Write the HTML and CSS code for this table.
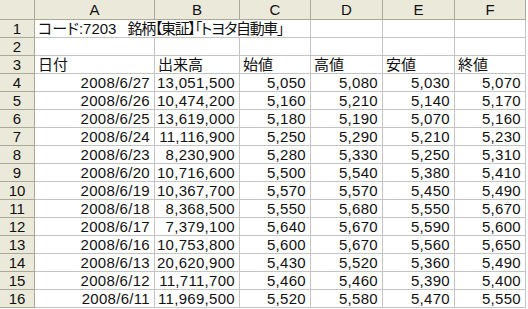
FILE: index.html
```html
<!DOCTYPE html>
<html lang="ja">
<head>
<meta charset="utf-8">
<link rel="stylesheet" href="styles.css">
</head>
<body>
<div class="sheet">
  <div class="corner"></div>
  <div class="ch">A</div><div class="ch">B</div><div class="ch">C</div><div class="ch">D</div><div class="ch">E</div><div class="ch">F</div>

  <div class="rh">1</div>
  <div class="c span3"><span>コード:7203　</span><span class="tight">銘柄【東証】「トヨタ自動車」</span></div><div class="c"></div><div class="c"></div><div class="c"></div>

  <div class="rh">2</div>
  <div class="c"></div><div class="c"></div><div class="c"></div><div class="c"></div><div class="c"></div><div class="c"></div>

  <div class="rh">3</div>
  <div class="c">日付</div><div class="c">出来高</div><div class="c">始値</div><div class="c">高値</div><div class="c">安値</div><div class="c">終値</div>

  <div class="rh">4</div>
  <div class="c n">2008/6/27</div><div class="c n">13,051,500</div><div class="c n">5,050</div><div class="c n">5,080</div><div class="c n">5,030</div><div class="c n">5,070</div>
  <div class="rh">5</div>
  <div class="c n">2008/6/26</div><div class="c n">10,474,200</div><div class="c n">5,160</div><div class="c n">5,210</div><div class="c n">5,140</div><div class="c n">5,170</div>
  <div class="rh">6</div>
  <div class="c n">2008/6/25</div><div class="c n">13,619,000</div><div class="c n">5,180</div><div class="c n">5,190</div><div class="c n">5,070</div><div class="c n">5,160</div>
  <div class="rh">7</div>
  <div class="c n">2008/6/24</div><div class="c n">11,116,900</div><div class="c n">5,250</div><div class="c n">5,290</div><div class="c n">5,210</div><div class="c n">5,230</div>
  <div class="rh">8</div>
  <div class="c n">2008/6/23</div><div class="c n">8,230,900</div><div class="c n">5,280</div><div class="c n">5,330</div><div class="c n">5,250</div><div class="c n">5,310</div>
  <div class="rh">9</div>
  <div class="c n">2008/6/20</div><div class="c n">10,716,600</div><div class="c n">5,500</div><div class="c n">5,540</div><div class="c n">5,380</div><div class="c n">5,410</div>
  <div class="rh">10</div>
  <div class="c n">2008/6/19</div><div class="c n">10,367,700</div><div class="c n">5,570</div><div class="c n">5,570</div><div class="c n">5,450</div><div class="c n">5,490</div>
  <div class="rh">11</div>
  <div class="c n">2008/6/18</div><div class="c n">8,368,500</div><div class="c n">5,550</div><div class="c n">5,680</div><div class="c n">5,550</div><div class="c n">5,670</div>
  <div class="rh">12</div>
  <div class="c n">2008/6/17</div><div class="c n">7,379,100</div><div class="c n">5,640</div><div class="c n">5,670</div><div class="c n">5,590</div><div class="c n">5,600</div>
  <div class="rh">13</div>
  <div class="c n">2008/6/16</div><div class="c n">10,753,800</div><div class="c n">5,600</div><div class="c n">5,670</div><div class="c n">5,560</div><div class="c n">5,650</div>
  <div class="rh">14</div>
  <div class="c n">2008/6/13</div><div class="c n">20,620,900</div><div class="c n">5,430</div><div class="c n">5,520</div><div class="c n">5,360</div><div class="c n">5,490</div>
  <div class="rh">15</div>
  <div class="c n">2008/6/12</div><div class="c n">11,711,700</div><div class="c n">5,460</div><div class="c n">5,460</div><div class="c n">5,390</div><div class="c n">5,400</div>
  <div class="rh">16</div>
  <div class="c n">2008/6/11</div><div class="c n">11,969,500</div><div class="c n">5,520</div><div class="c n">5,580</div><div class="c n">5,470</div><div class="c n">5,550</div>
</div>
</body>
</html>
```

FILE: styles.css
```css
html, body {
  margin: 0;
  padding: 0;
  background: #ffffff;
}
.sheet {
  display: grid;
  grid-template-columns: 35px 120px 85px 71px 72px 72px 71px;
  grid-template-rows: 20px repeat(16, 18px);
  font-family: "Liberation Sans", "Noto Sans CJK JP", sans-serif;
  font-size: 15px;
  color: #111;
  width: 526px;
}
.sheet > div {
  box-sizing: border-box;
  white-space: nowrap;
}
.corner, .ch, .rh {
  background: #ebe9da;
  border-right: 1px solid #aca899;
  border-bottom: 1px solid #aca899;
  display: flex;
  align-items: center;
  justify-content: center;
  line-height: 16px;
}
.ch {
  padding-top: 1px;
}
.c {
  border-right: 1px solid #c4c4c4;
  border-bottom: 1px solid #c4c4c4;
  display: flex;
  align-items: flex-end;
  padding: 0 4px 0 3px;
  line-height: 16px;
}
.c.n {
  justify-content: flex-end;
  letter-spacing: 0.3px;
}
.span3 {
  grid-column: span 3;
  font-feature-settings: "palt" 1;
}
.span3 > span {
  white-space: pre;
}
.tight {
  letter-spacing: -1.3px;
  margin-left: -4px;
}
```
